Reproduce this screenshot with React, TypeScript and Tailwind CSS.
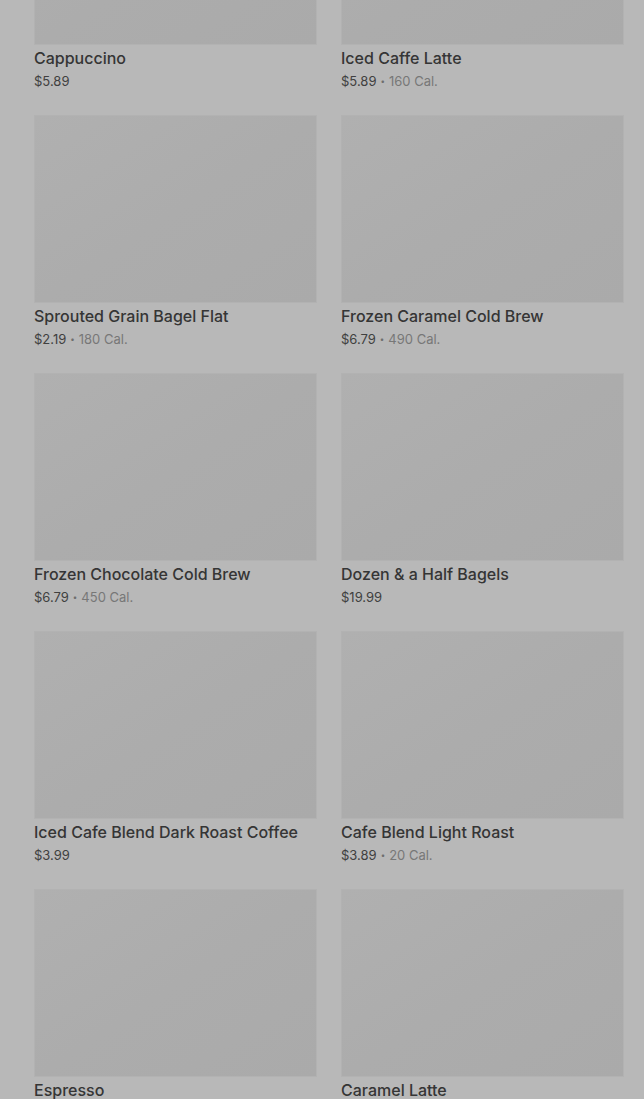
import React from 'react';

type Item = { name: string; price: string; cal?: string };

const ITEMS: Item[] = [
  { name: 'Cappuccino', price: '$5.89' },
  { name: 'Iced Caffe Latte', price: '$5.89', cal: '160 Cal.' },
  { name: 'Sprouted Grain Bagel Flat', price: '$2.19', cal: '180 Cal.' },
  { name: 'Frozen Caramel Cold Brew', price: '$6.79', cal: '490 Cal.' },
  { name: 'Frozen Chocolate Cold Brew', price: '$6.79', cal: '450 Cal.' },
  { name: 'Dozen & a Half Bagels', price: '$19.99' },
  { name: 'Iced Cafe Blend Dark Roast Coffee', price: '$3.99' },
  { name: 'Cafe Blend Light Roast', price: '$3.89', cal: '20 Cal.' },
  { name: 'Espresso', price: '$2.49' },
  { name: 'Caramel Latte', price: '$5.99', cal: '250 Cal.' },
];

function ItemCard({ item }: { item: Item }) {
  return (
    <div className="flex flex-col">
      {/* placeholder image */}
      <div className="h-[188px] w-full bg-gradient-to-br from-[#b0b0b0] via-[#acacac] to-[#aaaaaa] border border-[#b2b2b2]" />
      <div className="pt-[1px] text-[16px] leading-[24px] font-medium text-[#353535] truncate">
        {item.name}
      </div>
      <div className="pt-[1px] text-[13px] leading-[20px] text-[#404040] flex items-center">
        <span>{item.price}</span>
        {item.cal && (
          <>
            <span className="mx-[4px] text-[8px] text-[#6e6e6e]">•</span>
            <span className="text-[#777777]">{item.cal}</span>
          </>
        )}
      </div>
    </div>
  );
}

export default function App() {
  return (
    <div
      className="w-[644px] h-[1099px] overflow-hidden bg-[#b8b8b8]"
      style={{ fontFamily: 'Inter, "Noto Sans", sans-serif' }}
    >
      <div className="mt-[-143px] pl-[34px] pr-[20px] grid grid-cols-2 gap-x-[24px] gap-y-[24px]">
        {ITEMS.map((item) => (
          <ItemCard key={item.name} item={item} />
        ))}
      </div>
    </div>
  );
}
